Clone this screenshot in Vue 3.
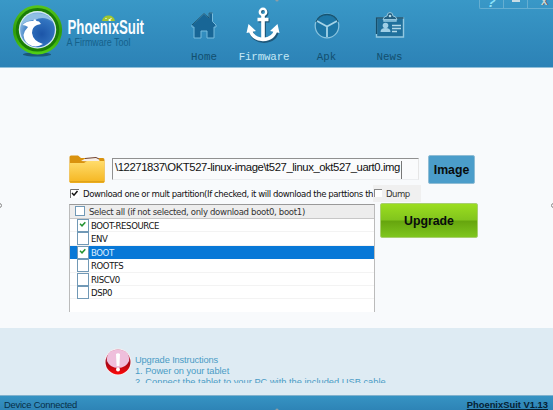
<script setup>
const partitions = [
  { name: 'BOOT-RESOURCE', checked: true },
  { name: 'ENV', checked: false },
  { name: 'BOOT', checked: true, selected: true },
  { name: 'ROOTFS', checked: false },
  { name: 'RISCV0', checked: false },
  { name: 'DSP0', checked: false },
]
</script>

<template>
  <div class="app">
    <header class="top">
      <svg class="brand" width="165" height="67" viewBox="0 0 165 67">
        <defs>
          <linearGradient id="ring" x1="0" y1="0" x2="0" y2="1">
            <stop offset="0" stop-color="#56c51b" /><stop offset=".55" stop-color="#2f9d0b" /><stop offset="1" stop-color="#51d013" />
          </linearGradient>
          <radialGradient id="orb" cx=".62" cy=".62" r=".75">
            <stop offset="0" stop-color="#1c55a8" /><stop offset=".55" stop-color="#3274c0" /><stop offset="1" stop-color="#a5cfeb" />
          </radialGradient>
        </defs>
        <ellipse cx="37" cy="54.5" rx="14" ry="2" fill="#174b69" opacity=".8" />
        <circle cx="37.5" cy="29.8" r="24.6" fill="url(#ring)" />
        <circle cx="37.5" cy="29.8" r="20.2" fill="none" stroke="#1b7c08" stroke-width="3" />
        <circle cx="37.5" cy="29.8" r="18.7" fill="#d5e8f3" />
        <circle cx="37.5" cy="29.8" r="17.4" fill="url(#orb)" />
        <path d="M21 25C23 17 30 13 38 13.2C45 13.5 50 16 53 22C47 17 40 17 35 20C31 20 26 21 21 25Z" fill="#8fbfe3" />
        <path d="M22.5 25Q27 20.5 33 21L35 19Q36 21.5 39 21.5L41 24L37 25Q32 27 32 33Q33 41 43 44Q38 47.5 32 46Q24 43 23.5 35Q24 31 28 27Q25 25 22.5 25Z" fill="#fff" />
        <path d="M102 21Q103 15.5 108.5 15.5Q114 15.5 115 21Z" fill="#9fc52e" />
        <circle cx="106" cy="18.4" r=".6" fill="#fff" /><circle cx="111" cy="18.4" r=".6" fill="#fff" />
        <text x="67.5" y="33.6" class="brand-name" textLength="76.5" lengthAdjust="spacingAndGlyphs">PhoenixSuit</text>
        <text x="66.5" y="46" class="brand-sub" textLength="64" lengthAdjust="spacingAndGlyphs">A Firmware Tool</text>
      </svg>
      <nav>
        <a class="tab home">
          <svg width="34" height="34" viewBox="0 0 34 34">
            <path d="M5 18L17 6.5L22 11V6h3.5v8.5L29 18v2h-2v11h-7v-7h-6v7H7V20H5Z" fill="#186696" stroke="#76bbdd" stroke-linejoin="round" />
            <path d="M5 18L17 6.5L22 11V6h3.5" fill="none" stroke="#185573" />
          </svg>
          <span>Home</span>
        </a>
        <a class="tab firmware active">
          <svg width="38" height="38" viewBox="0 0 38 38">
            <g transform="translate(1 1)" fill="none" stroke="#1e587b" stroke-width="4">
              <circle cx="19" cy="6" r="3.2" stroke-width="2.6" /><path d="M19 9V34M13.5 13.5h11M6 23Q7 33 19 34Q31 33 32 23" />
            </g>
            <g fill="none" stroke="#fff" stroke-width="3.6">
              <circle cx="19" cy="6" r="3.2" stroke-width="2.4" /><path d="M19 9V33M13.5 13.5h11" /><path d="M6 23Q8 33 19 33.5Q30 33 32 23" />
            </g>
            <path d="M2.5 27L4.5 18L12 25ZM35.5 27L33.5 18L26 25Z" fill="#fff" />
          </svg>
          <span>Firmware</span>
        </a>
        <a class="tab apk">
          <svg width="28" height="28" viewBox="0 0 28 28">
            <circle cx="14" cy="14" r="11.8" fill="#1d76a6" stroke="#8bc4df" stroke-width="1.2" />
            <path d="M3 10A11.8 11.8 0 0 1 25 10" fill="none" stroke="#155473" stroke-width="1.5" />
            <path d="M4 9L14 14.5L24 9M14 14.5V25" fill="none" stroke="#a4d3e7" stroke-width="1.8" />
          </svg>
          <span>Apk</span>
        </a>
        <a class="tab news">
          <svg width="32" height="30" viewBox="0 0 32 30">
            <path d="M2.5 8h7.5v3h12V8h7.5v19H2.5Z" fill="#20709c" stroke="#92c8e0" stroke-width="1.4" />
            <path d="M2.5 24V8h7.5M22 8h7.5" fill="none" stroke="#164e6b" stroke-width="1.4" />
            <path d="M9 9.5Q10 6 13 6Q13 2.5 16 2.5Q19 2.5 19 6Q22 6 23 9.5Z" fill="#235f81" stroke="#93c5dc" />
            <circle cx="16" cy="6" r="1.3" fill="#b6dceb" />
            <circle cx="11.5" cy="15.5" r="2.8" fill="#9fcfe6" /><path d="M6.5 22q0-4 5-4t5 4Z" fill="#9fcfe6" />
            <path d="M18 15.5h9M18 18.5h9M18 21.5h5" stroke="#b2d9e9" stroke-width="1.5" />
          </svg>
          <span>News</span>
        </a>
      </nav>
      <div class="window-controls"><b class="help">?</b><b class="min"></b><b class="close">x</b></div>
      <svg class="edge-mark" width="5" height="2"><circle cx="2" cy="0" r="1.6" fill="#8d9da5" /></svg>
    </header>

    <main>
      <div class="file-row">
        <svg width="36" height="29" viewBox="0 0 36 29">
          <defs><linearGradient id="folder" x1="0" y1="0" x2="0" y2="1"><stop stop-color="#ffdc6c" /><stop offset="1" stop-color="#f5b51f" /></linearGradient></defs>
          <path d="M.5 2Q.5.5 2 .5H9L12 3H34Q35.5 3 35.5 5V27H.5Z" fill="#d9920e" />
          <path d="M12 6L18 2.5L29 2L31 7Z" fill="#f7eee5" /><path d="M16 3.5L27 2.5L30 4" stroke="#704334" fill="none" />
          <path d="M.5 8H15L18 6H35.5V26.5Q35.5 28 34 28H2Q.5 28 .5 26.5Z" fill="url(#folder)" />
          <path d="M1 26.8H35" stroke="#d69a18" />
        </svg>
        <div class="path"><span>\12271837\OKT527-linux-image\t527_linux_okt527_uart0.img</span><i></i></div>
        <button class="image-button">Image</button>
      </div>
      <div class="options">
        <svg class="check" width="9" height="9" viewBox="0 0 9 9"><path d="M0 0H9V9H0Z" fill="#fff" /><path d="M.5 9V.5H9" stroke="#707070" fill="none" /><path d="M2 4L4 6.2L7.5 2" stroke="#111" stroke-width="1.5" fill="none" /></svg>
        <span class="download">Download one or mult partition(If checked, it will download the parttions th</span>
        <div class="dump"><i></i><span>Dump</span></div>
      </div>
      <div class="lower">
        <section class="table">
          <div class="table-head"><i class="box"></i><span>Select all (if not selected, only download boot0, boot1)</span></div>
          <div v-for="p in partitions" :key="p.name" class="row" :class="{ selected: p.selected }">
            <i class="box"><svg v-if="p.checked" width="10" height="11" viewBox="0 0 10 11"><path d="M2 3.8L4 5.8L7.3 2.2" fill="none" stroke="#259432" stroke-width="1.5" /></svg></i>
            <span>{{ p.name }}</span>
          </div>
        </section>
        <button class="upgrade-button">Upgrade</button>
      </div>
      <i class="side left"></i><i class="side right"></i>
    </main>

    <section class="instructions">
      <svg width="28" height="28" viewBox="0 0 28 28">
        <defs><linearGradient id="alert" x1="0" y1="0" x2="0" y2="1"><stop stop-color="#d77991" /><stop offset=".55" stop-color="#a50717" /><stop offset="1" stop-color="#ff0808" /></linearGradient></defs>
        <circle cx="14" cy="14" r="13.5" fill="#f5edf0" /><circle cx="14" cy="14" r="12.5" fill="url(#alert)" />
        <path d="M3 13Q2 2 14 1.8Q26 2 25 13Q22 20 14 20Q6 20 3 13Z" fill="#efbfdc" />
        <path d="M12 6Q14 4.5 16 6L15.4 18H12.6Z" fill="#fff" /><circle cx="14" cy="21.5" r="2" fill="#fff" />
      </svg>
      <div class="steps">
        <p class="s0">Upgrade Instructions</p><p class="s1">1. Power on your tablet</p><p class="s2">2. Connect the tablet to your PC with the included USB cable</p>
      </div>
    </section>
    <footer>
      <span>Device Connected</span><a>PhoenixSuit V1.13</a>
      <svg class="edge-mark bottom" width="5" height="2"><circle cx="2" cy="2" r="1.6" fill="#8d9da5" /></svg>
    </footer>
  </div>
</template>

<style>
body { margin: 0; overflow: hidden; }
</style>

<style scoped>
* { box-sizing: border-box; }
.app { width: 553px; height: 410px; display: flex; flex-direction: column; background: #f8fafc; overflow: hidden; font-family: "Liberation Sans", sans-serif; color: #111; white-space: nowrap; }
.top { position: relative; height: 68px; flex: none; display: flex; background: linear-gradient(#3998c7, #2c82b6); border-bottom: 1px solid #91bfd9; }
.brand { flex: none; }
.brand-name { font: bold 21px "Liberation Sans Narrow", "Liberation Sans", sans-serif; fill: #f9fdff; }
.brand-sub { font: 10.5px "Liberation Sans", sans-serif; fill: #15618b; }
nav { display: flex; padding-left: 13px; }
.tab { height: 68px; display: flex; flex-direction: column; align-items: center; justify-content: flex-end; font: 10.8px/13px "Liberation Mono", monospace; color: #124f6f; padding-bottom: 4px; }
.tab svg { flex: none; }
.home { width: 52px; }
.home svg { margin-bottom: 10px; }
.firmware { width: 66px; }
.firmware svg { margin-bottom: 7px; }
.firmware span { letter-spacing: -.15px; padding-left: 2px; }
.active { color: #c4e8f5; }
.apk { width: 61px; }
.apk svg { margin-bottom: 11px; }
.news { width: 65px; }
.news svg { margin-bottom: 11px; }
.window-controls { position: absolute; right: 0; top: 0; width: 74px; height: 9px; display: grid; grid-template-columns: 24px 24px 25px; border: 1px solid #65aed1; border-top: 0; border-right: 0; border-radius: 0 0 0 2px; overflow: hidden; }
.window-controls b { border-right: 1px solid #65aed1; text-align: center; font-size: 12px; line-height: 5px; color: #b7dbe9; }
.window-controls .help { color: #8be2fa; font-size: 14px; line-height: 4px; font-style: italic; }
.window-controls .close { border-right: 0; padding-left: 7px; line-height: 2px; color: #c2d4dc; text-shadow: 1px 0 #46525b; }
.min::before { content: ''; display: block; width: 8px; height: 2px; background: #c8dce4; margin: 0 auto; }
.edge-mark { position: absolute; left: 275px; top: 0; }
.edge-mark.bottom { top: auto; bottom: 0; }
main { position: relative; height: 260px; padding: 87px 75px 0 69px; flex: none; }
.file-row { height: 30px; display: flex; }
.path { width: 307px; height: 22px; margin: 3px 9px 0 7px; border-top: 1px solid #909090; border-left: 1px solid #909090; border-right: 1px solid #e6e6e6; border-bottom: 1px solid #eceef0; display: flex; align-items: flex-start; font-size: 11.3px; line-height: 17px; padding-left: 2px; background: #fafbfc; }
.path span { width: 286px; letter-spacing: -.42px; }
.path i { width: 1px; height: 18px; margin-top: 2px; background: #777; }
button { border: 0; padding: 0; font: bold 12px "Liberation Sans", sans-serif; color: #080c0c; }
.image-button { width: 47px; height: 29px; background: #4b9dca; border: 1px solid #90bdd5; border-radius: 2px; font-size: 12.3px; }
.options { height: 17px; display: flex; font: 9.5px/17px "DejaVu Sans Condensed", sans-serif; }
.check { margin: 4px 4px 0 1px; }
.download { width: 290px; overflow: hidden; letter-spacing: -.42px; }
.dump { width: 48px; display: flex; background: #f0f0f0; padding-left: 1px; letter-spacing: -.5px; color: #333; }
.dump i { width: 8px; height: 8px; margin: 4px 4px 0 0; background: white; border-top: 1px solid #888; border-left: 1px solid #888; }
.lower { display: flex; padding-top: 1px; }
.table { width: 306px; height: 108px; margin-top: 1px; border: 1px solid #bbb; border-bottom: 0; border-top-color: #999; background: #fff; font: 9.5px/13.4px "DejaVu Sans Condensed", sans-serif; overflow: hidden; }
.table-head { height: 14px; display: flex; background: #ededed; border-bottom: 1px solid #c7c7c7; padding-left: 5px; letter-spacing: -.33px; color: #333; }
.table-head .box { width: 10px; height: 10px; margin: 1px 4px 0 0; }
.box { flex: none; display: block; background: #fff; border: 1px solid #7199b6; }
.row { height: 13.4px; display: flex; padding-left: 7px; border-bottom: 1px solid #f3f3f3; letter-spacing: -.4px; }
.row .box { width: 12px; height: 13px; margin-right: 2px; line-height: 0; }
.selected { background: #0878d7; border-bottom-color: #0878d7; color: #dceeff; }
.upgrade-button { width: 98px; height: 35px; margin-left: 5px; background: linear-gradient(#9bdd1f, #82c51d 48%, #66a50e 52%, #7fc61e); border: 1px solid #a9cf70; border-radius: 2px; font-size: 12.3px; }
.side { position: absolute; width: 5px; height: 5px; top: 135px; border: 1px solid #888; border-radius: 50%; }
.left { left: -3px; }
.right { right: -3px; }
.instructions { height: 67px; flex: none; padding: 20px 0 0 104px; display: flex; gap: 3px; background: #deebf3; }
.instructions svg { flex: none; }
.steps { height: 35px; overflow: hidden; padding-top: 7px; font-size: 9.3px; line-height: 11px; color: #4a9bc5; }
.steps p { margin: 0; }
.s0 { letter-spacing: -.14px; }
.s1 { letter-spacing: -.06px; }
footer { position: relative; height: 15px; flex: none; display: flex; justify-content: space-between; align-items: flex-end; padding: 0 5px 0 4px; background: linear-gradient(#3693c3, #2e84b6); border-top: 1px solid #80b2ce; font-size: 9.4px; line-height: 11px; color: #072f47; }
footer span { letter-spacing: -.22px; }
footer a { font-weight: bold; text-decoration: underline; color: #052133; }
</style>
